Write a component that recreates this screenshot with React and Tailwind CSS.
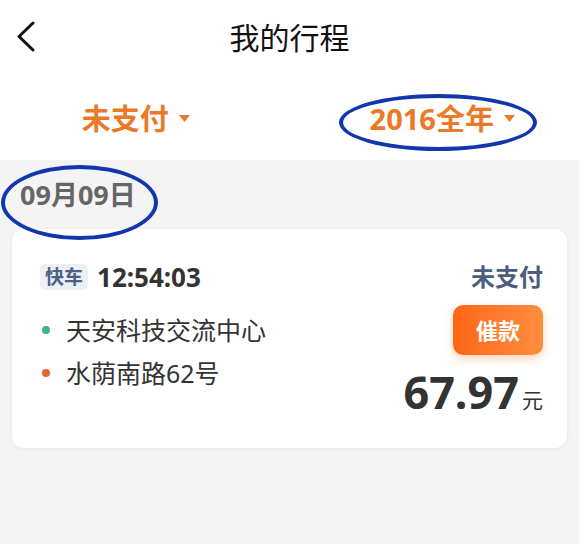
import React from 'react';

const font = { fontFamily: '"Noto Sans", "Noto Sans CJK SC", sans-serif' };

function Caret() {
  return (
    <svg width="11" height="7" viewBox="0 0 11 7" className="ml-[10px]">
      <polygon points="0,0 11,0 5.5,7" fill="#ea7a28" />
    </svg>
  );
}

export default function App() {
  return (
    <div className="relative w-[579px] h-[544px] bg-[#f4f4f4] overflow-hidden" style={font}>
      {/* 顶部 */}
      <div className="bg-white">
        <div className="relative h-[76px] flex items-center justify-center">
          <svg width="20" height="32" viewBox="0 0 20 32" className="absolute left-[16px] top-[21px]">
            <polyline points="17,2 3,15.5 17,29" fill="none" stroke="#111" strokeWidth="3" strokeLinecap="round" strokeLinejoin="round" />
          </svg>
          <span className="text-[30px] text-[#111] leading-none">我的行程</span>
        </div>
        <div className="h-[84px] flex items-center">
          <div className="w-1/2 flex items-center justify-center pr-[18px]">
            <span className="text-[29px] font-bold text-[#ea7a28] leading-none">未支付</span>
            <Caret />
          </div>
          <div className="w-1/2 flex items-center justify-center pl-[16px]">
            <span className="text-[29px] font-bold text-[#ea7a28] leading-none">2016全年</span>
            <Caret />
          </div>
        </div>
      </div>

      {/* 日期 */}
      <div className="h-[69px] flex items-center pl-[20px]">
        <span className="text-[27px] font-bold text-[#666] leading-none">09月09日</span>
      </div>

      {/* 行程卡片 */}
      <div className="mx-[12px] w-[555px] bg-white rounded-[12px] shadow-[0_1px_4px_rgba(0,0,0,0.06)] flex justify-between pt-[35px] pb-[34px] pl-[28px] pr-[24px]">
        <div className="flex flex-col">
          <div className="h-[26px] flex items-center">
            <span className="h-[26px] px-[5px] rounded-[5px] bg-[#edf1f7] text-[#4c6285] text-[19px] font-bold leading-[26px]">快车</span>
            <span className="ml-[9px] text-[26px] font-bold text-[#333] leading-none">12:54:03</span>
          </div>
          <div className="mt-[23px] h-[34px] flex items-center pl-[2px]">
            <span className="w-[8px] h-[8px] rounded-full bg-[#3db58f]" />
            <span className="ml-[16px] text-[25px] text-[#333] leading-none">天安科技交流中心</span>
          </div>
          <div className="mt-[9px] h-[34px] flex items-center pl-[2px]">
            <span className="w-[8px] h-[8px] rounded-full bg-[#e8603c]" />
            <span className="ml-[16px] text-[25px] text-[#333] leading-none">水荫南路62号</span>
          </div>
        </div>
        <div className="flex flex-col items-end">
          <div className="h-[26px] flex items-center">
            <span className="text-[24px] font-bold text-[#4c5e7e] leading-none">未支付</span>
          </div>
          <div className="mt-[15px] w-[90px] h-[50px] rounded-[10px] bg-gradient-to-r from-[#ff6614] to-[#ff8d3e] shadow-[0_4px_10px_rgba(255,110,30,0.3)] flex items-center justify-center">
            <span className="text-[22px] font-bold text-white leading-none">催款</span>
          </div>
          <div className="mt-[13px] h-[46px] flex items-end">
            <span className="text-[45px] font-bold text-[#333] leading-none">67.97</span>
            <span className="ml-[3px] mb-[3px] text-[21px] text-[#333] leading-none">元</span>
          </div>
        </div>
      </div>

      {/* 标注圈 */}
      <div className="absolute left-[339px] top-[94px] w-[198px] h-[57px] rounded-[50%] border-[4px] border-[#1236ad]" />
      <div className="absolute left-[1px] top-[165px] w-[157px] h-[75px] rounded-[50%] border-[4px] border-[#1236ad]" />
    </div>
  );
}
